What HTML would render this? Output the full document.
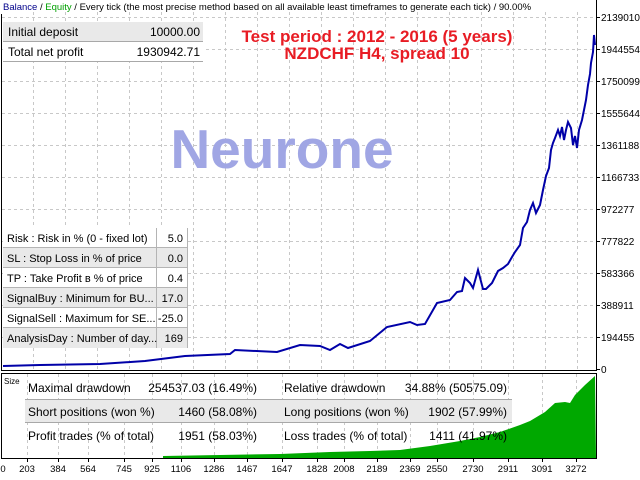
<!DOCTYPE html>
<html><head><meta charset="utf-8"><style>
html,body{margin:0;padding:0;background:#fff;width:640px;height:480px;overflow:hidden}
svg{display:block;font-family:"Liberation Sans",sans-serif}
</style></head><body>
<svg width="640" height="480" viewBox="0 0 640 480" xmlns="http://www.w3.org/2000/svg">
<rect width="640" height="480" fill="#fff"/>
<g stroke="#c8c8c8" stroke-dasharray="3,3" stroke-width="1">
<path d="M33.5 12V370M65.5 12V370M97.5 12V370M129.5 12V370M161.5 12V370M193.5 12V370M225.5 12V370M257.5 12V370M289.5 12V370M321.5 12V370M353.5 12V370M385.5 12V370M417.5 12V370M449.5 12V370M481.5 12V370M513.5 12V370M545.5 12V370M577.5 12V370"/>
<path d="M2 17.5H596M2 49.5H596M2 81.5H596M2 113.5H596M2 145.5H596M2 177.5H596M2 209.5H596M2 241.5H596M2 273.5H596M2 305.5H596M2 337.5H596"/>
<path d="M27.5 374V458M58.5 374V458M88.5 374V458M124.5 374V458M152.5 374V458M181.5 374V458M214.5 374V458M247.5 374V458M282.5 374V458M317.5 374V458M344.5 374V458M377.5 374V458M410.5 374V458M437.5 374V458M473.5 374V458M508.5 374V458M542.5 374V458M576.5 374V458"/>
</g>
<path d="M1.5 14V370.5H596.5V0" fill="none" stroke="#000"/>
<text x="3" y="10" font-size="9.5"><tspan fill="#00008b">Balance</tspan><tspan fill="#000"> / </tspan><tspan fill="#00a000">Equity</tspan><tspan fill="#000"> / Every tick (the most precise method based on all available least timeframes to generate each tick) / 90.00%</tspan></text>
<g font-size="10" fill="#000">
<text x="601" y="21">2139010</text><text x="601" y="53">1944554</text><text x="601" y="85">1750099</text><text x="601" y="117">1555644</text><text x="601" y="149">1361188</text><text x="601" y="181">1166733</text><text x="601" y="213">972277</text><text x="601" y="245">777822</text><text x="601" y="277">583366</text><text x="601" y="309">388911</text><text x="601" y="341">194455</text><text x="601" y="373">0</text>
</g>
<g stroke="#000"><path d="M596 17.5h4M596 49.5h4M596 81.5h4M596 113.5h4M596 145.5h4M596 177.5h4M596 209.5h4M596 241.5h4M596 273.5h4M596 305.5h4M596 337.5h4M596 369.5h4"/></g>
<text x="377" y="42" font-size="17" font-weight="bold" fill="#e81c24" text-anchor="middle">Test period : 2012 - 2016 (5 years)</text>
<text x="377" y="59" font-size="17" font-weight="bold" fill="#e81c24" text-anchor="middle">NZDCHF H4, spread 10</text>
<text x="282" y="168" font-size="55" font-weight="bold" fill="#a0a6e4" text-anchor="middle">Neurone</text>
<polyline fill="none" stroke="#0000a8" stroke-width="2" points="3,366 40,365 100,364 145,361 185,356 230,354 235,350 277,352 300,345 320,346 330,350 340,344 348,348 370,341 387,327 410,322 417,325 425,324 437,303 450,300 457,292 462,291 465,278 470,283 473,288 478,270 483,289 486,289 492,283 498,271 503,268 508,264 512,257 515,252 520,245 523,228 527,222 530,210 533,203 536,213 540,205 543,190 546,176 549,168 551,150 553,143 555,138 558,130 560,136 562,127 564,140 566,130 568,122 571,128 573,145 575,136 577,148 579,130 582,120 584,110 586,100 588,85 590,74 591,63 593,52 594,35 595,45"/>
<!-- green area -->
<polygon fill="#00a800" points="163,458 163,456 220,455 280,454 330,452 370,451 400,450 430,446 460,441 480,437 500,432 520,425 530,421 545,412 555,403 565,402 570,403 575,395 585,385 595,376 596,458"/>
<rect x="1.5" y="373.5" width="595" height="85" fill="none" stroke="#000"/>
<!-- top table -->
<rect x="3" y="22" width="200" height="19" fill="#e9e9e9"/>
<rect x="3" y="41" width="200" height="21" fill="#fff"/>
<path d="M3 41.5H203M3 61.5H203" stroke="#a8a8a8"/>
<g font-size="12" fill="#000"><text x="8" y="36">Initial deposit</text><text x="200" y="36" text-anchor="end">10000.00</text>
<text x="8" y="56">Total net profit</text><text x="200" y="56" text-anchor="end">1930942.71</text></g>
<g>
<rect x="3" y="228" width="184" height="120" fill="#fff"/>
<rect x="3" y="248" width="184" height="20" fill="#e9e9e9"/>
<rect x="3" y="288" width="184" height="20" fill="#e9e9e9"/>
<rect x="3" y="328" width="184" height="20" fill="#e9e9e9"/>
<path d="M3 247.5H187M3 267.5H187M3 287.5H187M3 307.5H187M3 327.5H187M156.5 228V348M187.5 228V348" stroke="#b4b4b4"/>
<g font-size="11" fill="#000">
<text x="7" y="242">Risk : Risk in % (0 - fixed lot)</text><text x="183" y="242" text-anchor="end">5.0</text>
<text x="7" y="262">SL : Stop Loss in % of price</text><text x="183" y="262" text-anchor="end">0.0</text>
<text x="7" y="282">TP : Take Profit в % of price</text><text x="183" y="282" text-anchor="end">0.4</text>
<text x="7" y="302">SignalBuy : Minimum for BU...</text><text x="183" y="302" text-anchor="end">17.0</text>
<text x="7" y="322">SignalSell : Maximum for SE...</text><text x="183" y="322" text-anchor="end">-25.0</text>
<text x="7" y="342">AnalysisDay : Number of day...</text><text x="183" y="342" text-anchor="end">169</text>
</g></g>
<!-- stats table -->
<rect x="25" y="399" width="487" height="24" fill="#e9e9e9"/>
<path d="M25 399.5H512M25 422.5H512" stroke="#a8a8a8"/>
<text x="4" y="384" font-size="8">Size</text>
<g font-size="12" fill="#000">
<text x="28" y="392">Maximal drawdown</text><text x="257" y="392" text-anchor="end">254537.03 (16.49%)</text>
<text x="284" y="392">Relative drawdown</text><text x="507" y="392" text-anchor="end">34.88% (50575.09)</text>
<text x="28" y="416">Short positions (won %)</text><text x="257" y="416" text-anchor="end">1460 (58.08%)</text>
<text x="284" y="416">Long positions (won %)</text><text x="507" y="416" text-anchor="end">1902 (57.99%)</text>
<text x="28" y="440">Profit trades (% of total)</text><text x="257" y="440" text-anchor="end">1951 (58.03%)</text>
<text x="284" y="440">Loss trades (% of total)</text><text x="507" y="440" text-anchor="end">1411 (41.97%)</text>
</g>
<g stroke="#000"><path d="M27.5 459v3M58.5 459v3M88.5 459v3M124.5 459v3M152.5 459v3M181.5 459v3M214.5 459v3M247.5 459v3M282.5 459v3M317.5 459v3M344.5 459v3M377.5 459v3M410.5 459v3M437.5 459v3M473.5 459v3M508.5 459v3M542.5 459v3M576.5 459v3"/></g>
<g font-size="9.5" fill="#000" text-anchor="middle">
<text x="3" y="472">0</text><text x="27" y="472">203</text><text x="58" y="472">384</text><text x="88" y="472">564</text><text x="124" y="472">745</text><text x="152" y="472">925</text><text x="181" y="472">1106</text><text x="214" y="472">1286</text><text x="247" y="472">1467</text><text x="282" y="472">1647</text><text x="317" y="472">1828</text><text x="344" y="472">2008</text><text x="377" y="472">2189</text><text x="410" y="472">2369</text><text x="437" y="472">2550</text><text x="473" y="472">2730</text><text x="508" y="472">2911</text><text x="542" y="472">3091</text><text x="576" y="472">3272</text>
</g>
</svg>
</body></html>
